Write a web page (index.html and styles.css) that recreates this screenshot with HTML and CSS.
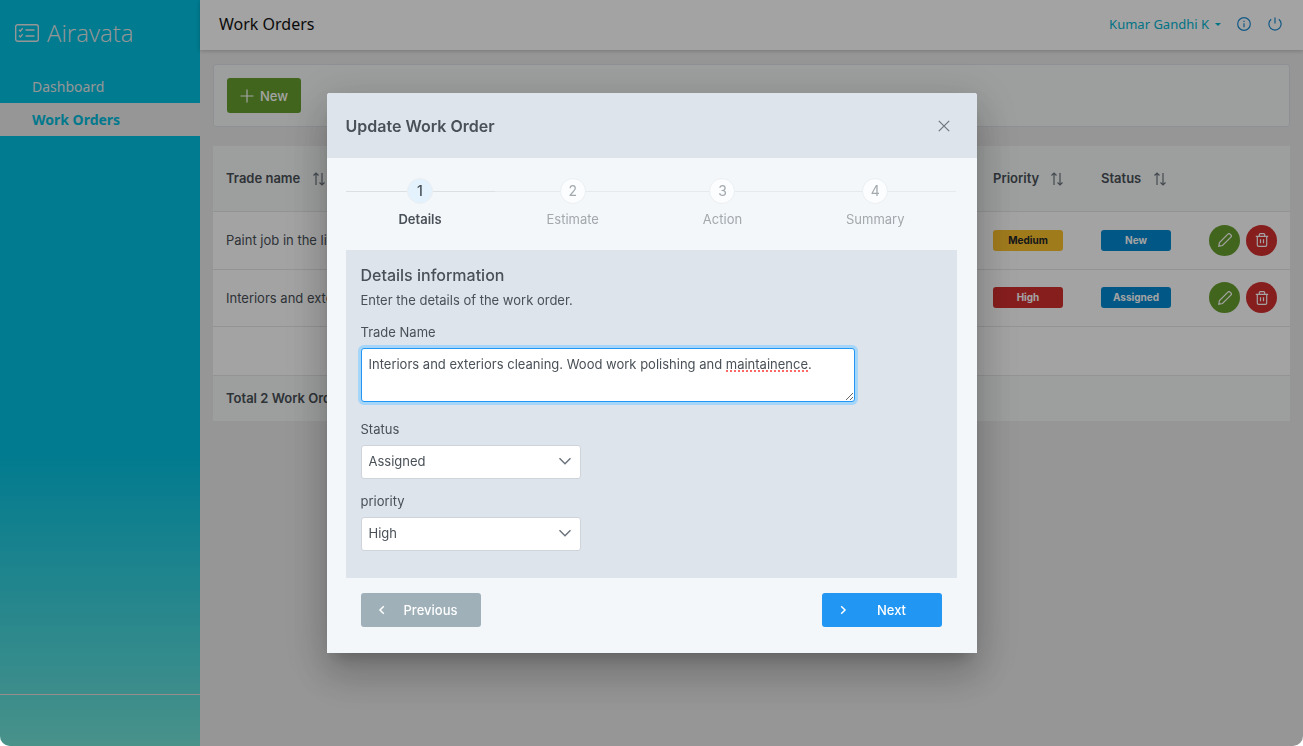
FILE: index.html
```html
<!DOCTYPE html>
<html lang="en">
<head>
<meta charset="utf-8">
<title>Work Orders - Airavata</title>
<link rel="stylesheet" href="styles.css">
</head>
<body>
<svg class="sprite" aria-hidden="true">
  <symbol id="i-sort" viewBox="0 0 14 14"><path d="M4 13V1M1.500 3.500 4 1l2.500 2.500M10 1v12M7.500 10.500 10 13l2.500-2.500"/></symbol>
  <symbol id="i-pencil" viewBox="0 0 14 14"><path d="M.8 13.200l.7-3.700L9.900 1.100a1.500 1.500 0 0 1 2.100 0l.9.900a1.500 1.500 0 0 1 0 2.100L4.500 12.500z"/></symbol>
  <symbol id="i-trash" viewBox="0 0 14 14"><path d="M.8 3.300h12.400M2.300 3.300v8.700a1.300 1.300 0 0 0 1.300 1.300h6.800a1.300 1.300 0 0 0 1.300-1.300V3.300M4.300 3.300V1.700a1 1 0 0 1 1-1h3.400a1 1 0 0 1 1 1v1.600M5.500 6.300v4M8.500 6.300v4"/></symbol>
  <symbol id="i-down" viewBox="0 0 14 14"><path d="M1.500 4.200 7 9.800l5.500-5.600"/></symbol>
</svg>
<div class="app">
  <aside class="sidebar">
    <div class="brand">
      <svg class="brand-icon" viewBox="0 0 24 18"><rect x=".7" y=".7" width="22.600" height="16.600" rx="2"/><path d="M4 5.800l1.300 1.300 2.400-2.800M4 11.600l1.300 1.300 2.400-2.800M10.500 6h9M10.500 12h9"/></svg>
      <span>Airavata</span>
    </div>
    <nav class="menu">
      <a href="#">Dashboard</a>
      <a href="#" class="active" aria-current="page">Work Orders</a>
    </nav>
    <div class="sidebar-foot"></div>
  </aside>
  <div class="main">
    <header class="topbar">
      <h1>Work Orders</h1>
      <div class="user">
        <button class="user-name" type="button">Kumar Gandhi K <span class="caret"></span></button>
        <button class="icon-link" type="button" aria-label="Information"><svg viewBox="0 0 14 14"><circle cx="7" cy="7" r="6.300"/><path d="M7 6.300v4M7 3.700v1.200"/></svg></button>
        <button class="icon-link" type="button" aria-label="Sign out"><svg viewBox="0 0 14 14"><path d="M7 .5v6M3.200 2.200a6.100 6.100 0 1 0 7.600 0"/></svg></button>
      </div>
    </header>
    <main class="content">
      <div class="toolbar">
        <button class="btn-new" type="button"><svg viewBox="0 0 14 14"><path d="M7 .5v13M.5 7h13"/></svg>New</button>
      </div>
      <table class="orders">
        <thead>
          <tr>
            <th>Trade name <svg class="sort"><use href="#i-sort"/></svg></th>
            <th class="col">Priority <svg class="sort"><use href="#i-sort"/></svg></th>
            <th class="col">Status <svg class="sort"><use href="#i-sort"/></svg></th>
            <th class="col-actions"></th>
          </tr>
        </thead>
        <tbody>
          <tr>
            <td>Paint job in the living room</td>
            <td><span class="tag medium">Medium</span></td>
            <td><span class="tag info">New</span></td>
            <td><div class="actions"><button class="edit" type="button" aria-label="Edit"><svg><use href="#i-pencil"/></svg></button><button class="delete" type="button" aria-label="Delete"><svg><use href="#i-trash"/></svg></button></div></td>
          </tr>
          <tr>
            <td>Interiors and exteriors</td>
            <td><span class="tag high">High</span></td>
            <td><span class="tag info">Assigned</span></td>
            <td><div class="actions"><button class="edit" type="button" aria-label="Edit"><svg><use href="#i-pencil"/></svg></button><button class="delete" type="button" aria-label="Delete"><svg><use href="#i-trash"/></svg></button></div></td>
          </tr>
          <tr class="blank"><td colspan="4"></td></tr>
        </tbody>
        <tfoot>
          <tr><td colspan="4">Total 2 Work Orders</td></tr>
        </tfoot>
      </table>
    </main>
  </div>
</div>

<div class="mask">
  <section class="dialog" role="dialog" aria-modal="true" aria-labelledby="dialog-title">
    <header class="dialog-head">
      <h2 id="dialog-title">Update Work Order</h2>
      <button class="close" type="button" aria-label="Close"><svg viewBox="0 0 14 14"><path d="M1.800 1.800l10.400 10.400M12.200 1.800 1.800 12.200"/></svg></button>
    </header>
    <div class="dialog-body">
      <ol class="steps">
        <li class="current" aria-current="step"><span class="num">1</span><span>Details</span></li>
        <li><span class="num">2</span><span>Estimate</span></li>
        <li><span class="num">3</span><span>Action</span></li>
        <li><span class="num">4</span><span>Summary</span></li>
      </ol>
      <form class="panel">
        <h3>Details information</h3>
        <p>Enter the details of the work order.</p>
        <label for="trade">Trade Name</label>
        <div class="area">
          <textarea id="trade" spellcheck="false">Interiors and exteriors cleaning. Wood work polishing and maintainence.</textarea>
          <span class="misspelt"></span>
        </div>
        <label for="status">Status</label>
        <div class="select">
          <select id="status"><option>Assigned</option><option>New</option></select>
          <svg><use href="#i-down"/></svg>
        </div>
        <label for="priority">priority</label>
        <div class="select">
          <select id="priority"><option>High</option><option>Medium</option></select>
          <svg><use href="#i-down"/></svg>
        </div>
      </form>
      <div class="pager">
        <button class="prev" type="button"><svg viewBox="0 0 14 14"><path d="M8.800 3.200 5 7l3.800 3.800"/></svg><span>Previous</span></button>
        <button class="next" type="button"><svg viewBox="0 0 14 14"><path d="M5.200 3.200 9 7l-3.800 3.800"/></svg><span>Next</span></button>
      </div>
    </div>
  </section>
</div>
</body>
</html>
```
FILE: styles.css
```css
* { box-sizing: border-box; }
html { background: #fff; }
body {
  margin: 0;
  font: 13px/20px Inter, "Liberation Sans", sans-serif;
  color: #495057;
}
h1, h2, h3, p, ol { margin: 0; padding: 0; }
button { font: inherit; border: 0; padding: 0; cursor: pointer; }
svg { fill: none; stroke: currentColor; stroke-width: 1.2; width: 14px; height: 14px; flex: none; }
.sprite { display: none; }

.app {
  display: flex;
  min-height: 100vh;
  background: #ebebeb;
  border-radius: 0 0 10px 10px;
  overflow: hidden;
}

/* Sidebar */
.sidebar {
  width: 200px;
  flex: none;
  display: flex;
  flex-direction: column;
  background: linear-gradient(#00c0e1 0, #00c0e1 60%, #72e4d8 100%);
  font-family: "Noto Sans", sans-serif;
  font-size: 14px;
  color: #ebebeb;
}
.brand {
  display: flex;
  align-items: center;
  gap: 8px;
  height: 70px;
  padding: 0 15px 4px;
  font: 300 24px/32px "Open Sans", sans-serif;
}
.brand-icon { width: 24px; height: 18px; stroke-width: 1.4; }
.menu { flex: 1; }
.menu a {
  display: block;
  padding: 0 32px;
  line-height: 33px;
  color: inherit;
  text-decoration: none;
}
.menu a.active { background: #ebebeb; color: #00bddd; font-weight: 700; }
.sidebar-foot { height: 52px; border-top: 1px solid #ebdede; }

/* Top bar */
.main { flex: 1; min-width: 0; }
.topbar {
  display: flex;
  align-items: center;
  justify-content: space-between;
  height: 50px;
  padding: 0 20px 2px 19px;
  background: #fff;
  box-shadow: 0 1px 4px rgba(0, 0, 0, .2);
  font-family: "Noto Sans", sans-serif;
}
.topbar h1 { font-size: 16px; font-weight: 400; line-height: 22px; color: #111; }
.user { display: flex; align-items: center; gap: 15px; }
.user button { background: none; }
.user-name { display: flex; align-items: center; gap: 6px; color: #00b4cf; }
.caret { border: 3px solid transparent; border-top-color: currentColor; border-bottom: 0; }
.icon-link { display: flex; color: #1b8ad0; padding: 0 1px; }

/* Content */
.content { padding: 14px 13px; }
.toolbar {
  padding: 13px;
  margin-bottom: 19px;
  background: #f6f9f8;
  border: 1px solid #dee2e6;
  border-radius: 3px;
}
.btn-new {
  display: flex;
  align-items: center;
  gap: 6px;
  height: 35px;
  padding: 0 13px;
  background: #689f2f;
  border-radius: 3px;
  color: #fff;
  font-weight: 500;
}
.orders { width: 100%; border-collapse: collapse; background: #fff; }
.orders th, .orders td { padding: 0 13px; text-align: left; border-bottom: 1px solid #e4e7e9; }
.orders th { height: 65px; background: #f6f9f8; font-weight: 600; }
.orders td { height: 57px; }
.orders tbody tr:first-child td { height: 58px; }
.orders .blank td { height: 49px; }
.orders tfoot td { height: 46px; background: #f6f9f8; border: 0; font-weight: 600; }
.col { width: 108px; }
.col-actions { width: 94px; }
.sort { margin-left: 8px; vertical-align: -3px; color: #6c757d; }
.tag {
  display: block;
  width: 70px;
  border-radius: 3px;
  color: #fff;
  font-size: 10px;
  font-weight: 700;
  line-height: 21px;
  text-align: center;
}
.medium { background: #fbc02d; color: #212529; }
.high { background: #d32f2f; }
.info { background: #0288d1; }
.actions { display: flex; gap: 6px; }
.actions button {
  display: grid;
  place-items: center;
  width: 31px;
  height: 31px;
  border-radius: 50%;
  color: #fff;
}
.edit { background: #689f2f; }
.delete { background: #d32f2f; }

/* Dialog */
.mask {
  position: fixed;
  inset: 0;
  display: flex;
  align-items: center;
  justify-content: center;
  background: rgba(0, 0, 0, .36);
  border-radius: 0 0 10px 10px;
}
.dialog {
  width: 650px;
  max-width: 95%;
  background: #f3f7fa;
  border-radius: 3px 3px 0 0;
  box-shadow: 0 11px 15px -7px rgba(0, 0, 0, .2), 0 24px 38px 3px rgba(0, 0, 0, .14), 0 9px 46px 8px rgba(0, 0, 0, .12);
}
.dialog-head {
  display: flex;
  align-items: center;
  justify-content: space-between;
  height: 65px;
  padding: 0 26px 0 19px;
  background: #dde4eb;
  border-radius: 3px 3px 0 0;
}
.dialog-head h2 { font-size: 16px; font-weight: 600; }
.close { display: flex; background: none; color: #6c757d; }
.dialog-body { padding: 20px 20px 26px 19px; }

.steps { display: flex; list-style: none; margin-bottom: 21px; }
.steps li {
  flex: 1 1 auto;
  display: flex;
  flex-direction: column;
  align-items: center;
  gap: 5px;
  color: #a3a8ac;
  background: linear-gradient(#e6eaed, #e6eaed) 0 13px / 100% 1px no-repeat;
}
.steps .current {
  padding: 0 1px;
  color: #495057;
  font-weight: 600;
  background-image: linear-gradient(#dbe0e4, #dbe0e4);
}
.num {
  width: 26px;
  height: 26px;
  border: 1px solid #eceff2;
  border-radius: 50%;
  background: #fcfdfe;
  font-size: 14px;
  font-weight: 400;
  line-height: 24px;
  text-align: center;
}
.current .num { background: #e3f2fd; font-weight: 500; }

.panel { padding: 15px 15px 27px; background: #dde4eb; }
.panel h3 { font-size: 16px; font-weight: 500; line-height: 20px; }
.panel p { margin: 5px 0 12px; }
.panel label { display: block; margin-bottom: 6px; }
.area { position: relative; width: 494px; max-width: 100%; margin-bottom: 17px; }
textarea, select {
  display: block;
  width: 100%;
  border: 1px solid #ced4da;
  border-radius: 3px;
  background: #fff;
  color: #495057;
  font: inherit;
}
textarea {
  height: 54px;
  padding: 5px 7px;
  border-color: #2196f3;
  outline: 0;
  box-shadow: 0 0 0 3px #a6d5fa;
  resize: both;
}
.misspelt {
  position: absolute;
  left: 365px;
  top: 22px;
  width: 82px;
  border-bottom: 2px dotted #f66;
  pointer-events: none;
}
.select { position: relative; width: 220px; margin-bottom: 12px; }
.select:last-child { margin-bottom: 0; }
select { appearance: none; height: 34px; padding: 0 7px 2px; }
.select svg { position: absolute; right: 9px; top: 9px; color: #6c757d; stroke-width: 1.5; pointer-events: none; }

.pager { display: flex; justify-content: space-between; padding: 15px 15px 0; }
.pager button {
  display: flex;
  align-items: center;
  width: 120px;
  height: 34px;
  padding: 0 8px 0 14px;
  border-radius: 3px;
  color: #fff;
  font-weight: 500;
}
.pager span { flex: 1; padding-bottom: 1px; text-align: center; }
.pager svg { stroke-width: 1.5; }
.prev { background: #9fb0b9; }
.next { background: #2196f3; }
```
